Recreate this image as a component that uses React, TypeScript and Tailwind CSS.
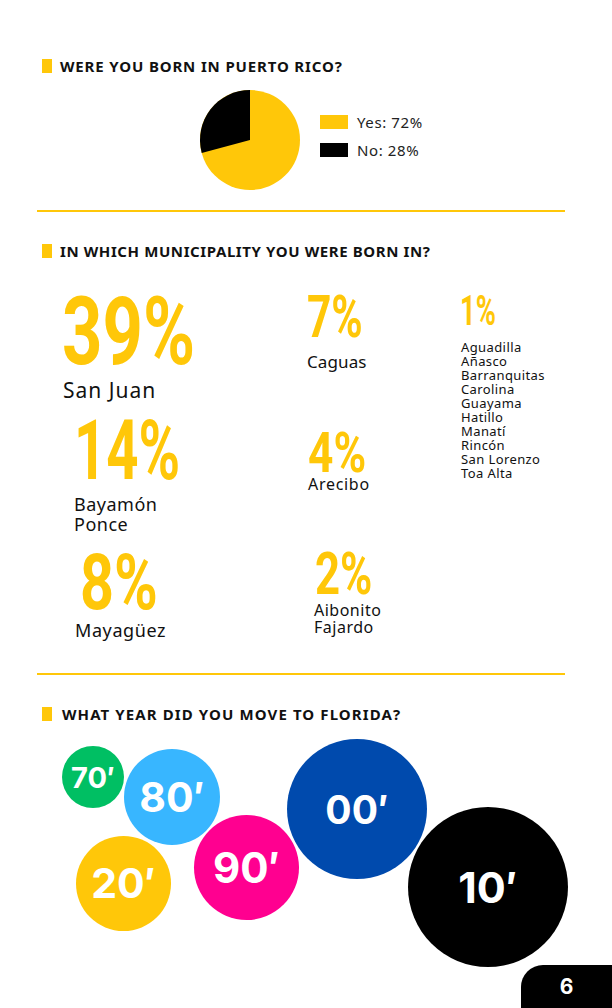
import React from "react";

const Y = "#ffc709";

function Header({ text, extra = "ml-[8px] tracking-[0.85px]" }: { text: string; extra?: string }) {
  return (
    <div className="flex h-[16px] items-center pl-[42px]">
      <div className="h-[14px] w-[10px] bg-[#ffc709]" />
      <div
        className={`whitespace-nowrap font-['Noto_Sans',sans-serif] text-[15px] font-bold leading-[16px] text-[#111] ${extra}`}
      >
        {text}
      </div>
    </div>
  );
}

function Num({ t, size, sx, cls }: { t: string; size: string; sx: string; cls: string }) {
  return (
    <div className={`${cls}`}>
      <span
        className={`inline-block origin-left font-['Roboto',sans-serif] font-bold leading-[0.74] text-[#ffc709] ${size} ${sx}`}
      >
        {t}
      </span>
    </div>
  );
}

function Bubble({ label, cls, text }: { label: string; cls: string; text: string }) {
  return (
    <div className={`absolute flex items-center justify-center rounded-full ${cls}`}>
      <span className={`font-['Inter',sans-serif] font-bold leading-none text-white ${text}`}>{label}</span>
    </div>
  );
}

export default function App() {
  return (
    <div className="relative h-[1008px] w-[612px] overflow-hidden bg-white pt-[58px] font-['Noto_Sans',sans-serif] text-[#111]">
      <Header text="WERE YOU BORN IN PUERTO RICO?" />
      <div className="mt-[16px] flex h-[100px] pl-[200px]">
        <svg width="100" height="100" viewBox="0 0 100 100">
          <circle cx="50" cy="50" r="50" fill={Y} />
          <path d="M50 50 L50 0 A50 50 0 0 0 1.7 62.9 Z" fill="#000" />
        </svg>
        <div className="ml-[20px] flex flex-col gap-[14px] pt-[25px]">
          <div className="flex h-[14px] items-center">
            <div className="h-[14px] w-[28px] bg-[#ffc709]" />
            <span className="ml-[9px] text-[15px] leading-none tracking-[0.6px] text-[#222]">Yes: 72%</span>
          </div>
          <div className="flex h-[14px] items-center">
            <div className="h-[14px] w-[28px] bg-black" />
            <span className="ml-[9px] text-[15px] leading-none tracking-[0.6px] text-[#222]">No: 28%</span>
          </div>
        </div>
      </div>
      <div className="ml-[37px] mt-[20px] h-[2px] w-[528px] bg-[#ffc709]" />

      <div className="mt-[31px]">
        <Header text="IN WHICH MUNICIPALITY YOU WERE BORN IN?" extra="ml-[8px] tracking-[0.6px]" />
      </div>

      <div className="flex h-[414px]">
        <div className="ml-[62px] w-[245px]">
          <Num t="39%" size="text-[94px]" sx="scale-x-[0.75]" cls="mt-[39px] h-[70px]" />
          <div className="ml-[1px] mt-[10px] text-[21px] leading-[24px] tracking-[1px]">San Juan</div>
          <Num t="14%" size="text-[84px]" sx="scale-x-[0.67]" cls="ml-[12px] mt-[18px] h-[62px]" />
          <div className="ml-[12px] mt-[12px] text-[18px] leading-[20px] tracking-[0.5px]">
            <div>Bayamón</div>
            <div>Ponce</div>
          </div>
          <Num t="8%" size="text-[77px]" sx="scale-x-[0.77]" cls="ml-[18px] mt-[21px] h-[57px]" />
          <div className="ml-[13px] mt-[8px] text-[18px] leading-[20px] tracking-[0.6px]">Mayagüez</div>
        </div>
        <div className="w-[153px]">
          <Num t="7%" size="text-[59px]" sx="scale-x-[0.72]" cls="mt-[36px] h-[44px]" />
          <div className="mt-[13px] text-[17px] leading-[20px] tracking-[0.1px]">Caguas</div>
          <Num t="4%" size="text-[56px]" sx="scale-x-[0.79]" cls="ml-[1px] mt-[61px] h-[41px]" />
          <div className="ml-[1px] mt-[0px] text-[16px] leading-[20px] tracking-[0.7px]">Arecibo</div>
          <Num t="2%" size="text-[59px]" sx="scale-x-[0.74]" cls="ml-[8px] mt-[58px] h-[44px]" />
          <div className="ml-[7px] mt-[6px] text-[16px] leading-[17px] tracking-[0.5px]">
            <div>Aibonito</div>
            <div>Fajardo</div>
          </div>
        </div>
        <div>
          <Num t="1%" size="text-[42px]" sx="scale-x-[0.65]" cls="mt-[36px] h-[31px]" />
          <div className="ml-[1px] mt-[14px] text-[13px] leading-[14px] tracking-[0.4px]">
            {["Aguadilla", "Añasco", "Barranquitas", "Carolina", "Guayama", "Hatillo", "Manatí", "Rincón", "San Lorenzo", "Toa Alta"].map(
              (m) => (
                <div key={m}>{m}</div>
              )
            )}
          </div>
        </div>
      </div>

      <div className="ml-[37px] h-[2px] w-[528px] bg-[#ffc709]" />

      <div className="mt-[31px]">
        <Header text="WHAT YEAR DID YOU MOVE TO FLORIDA?" extra="ml-[10px] tracking-[1.1px]" />
      </div>

      <div className="relative h-[286px]">
        <Bubble label="70′" cls="left-[62px] top-[24px] h-[62px] w-[62px] bg-[#00bf63]" text="text-[29px]" />
        <Bubble label="80′" cls="left-[124px] top-[27px] h-[96px] w-[96px] bg-[#38b6ff]" text="text-[41px]" />
        <Bubble label="20′" cls="left-[76px] top-[114px] h-[95px] w-[95px] bg-[#ffc709]" text="text-[41px]" />
        <Bubble label="90′" cls="left-[194px] top-[93px] h-[105px] w-[105px] bg-[#ff0090]" text="text-[42px]" />
        <Bubble label="00′" cls="left-[287px] top-[17px] h-[140px] w-[140px] bg-[#004aad]" text="text-[39px]" />
        <Bubble label="10′" cls="left-[408px] top-[85px] h-[160px] w-[160px] bg-black" text="text-[43px]" />
        <div className="absolute left-[521px] top-[243px] flex h-[43px] w-[91px] items-center justify-center rounded-tl-[22px] bg-black">
          <span className="font-['Inter',sans-serif] text-[21px] font-bold leading-none text-white">6</span>
        </div>
      </div>
    </div>
  );
}
